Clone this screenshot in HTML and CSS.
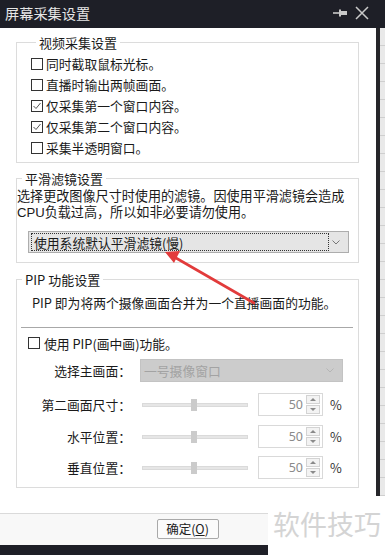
FILE: index.html
```html
<!DOCTYPE html>
<html lang="zh-CN">
<head>
<meta charset="utf-8">
<title>屏幕采集设置</title>
<link rel="stylesheet" href="styles.css">
</head>
<body>
<div class="window">
  <div class="titlebar">
    <span class="title">屏幕采集设置</span>
    <div class="tb-icons">
      <svg class="pin" width="16" height="10" viewBox="0 0 16 10"><path d="M0 5 H6" stroke="#c9c9c9" stroke-width="1.6"/><rect x="6" y="1.5" width="2" height="7" fill="#c9c9c9"/><rect x="8" y="3" width="6" height="4" fill="#c9c9c9"/></svg>
      <svg class="close" width="14" height="14" viewBox="0 0 14 14"><path d="M1 1 L13 13 M13 1 L1 13" stroke="#c9c9c9" stroke-width="1.5"/></svg>
    </div>
  </div>
  <div class="middle">
    <div class="dialog">
      <div class="content">
        <fieldset class="group g1">
          <legend>视频采集设置</legend>
          <div class="cb-row"><span class="cb"></span><span>同时截取鼠标光标。</span></div>
          <div class="cb-row"><span class="cb"></span><span>直播时输出两帧画面。</span></div>
          <div class="cb-row"><span class="cb checked"><svg width="10" height="10" viewBox="0 0 10 10"><path d="M1.5 5 L4 7.5 L8.5 2" fill="none" stroke="#555" stroke-width="1"/></svg></span><span>仅采集第一个窗口内容。</span></div>
          <div class="cb-row"><span class="cb checked"><svg width="10" height="10" viewBox="0 0 10 10"><path d="M1.5 5 L4 7.5 L8.5 2" fill="none" stroke="#555" stroke-width="1"/></svg></span><span>仅采集第二个窗口内容。</span></div>
          <div class="cb-row"><span class="cb"></span><span>采集半透明窗口。</span></div>
        </fieldset>

        <fieldset class="group g2">
          <legend>平滑滤镜设置</legend>
          <div class="desc">
            <span class="dline">选择更改图像尺寸时使用的滤镜。因使用平滑滤镜会造成</span>
            <span class="dline">CPU负载过高，所以如非必要请勿使用。</span>
          </div>
          <div class="select sel-main">
            <span class="focus">使用系统默认平滑滤镜(慢)</span>
            <svg class="chev" width="8" height="5" viewBox="0 0 8 5"><path d="M0.5 0.5 L4 4 L7.5 0.5" fill="none" stroke="#777" stroke-width="1"/></svg>
          </div>
        </fieldset>

        <fieldset class="group g3">
          <legend>PIP 功能设置</legend>
          <p class="pip-desc">PIP 即为将两个摄像画面合并为一个直播画面的功能。</p>
          <div class="sep"></div>
          <div class="cb-row pip-cb"><span class="cb"></span><span>使用 PIP(画中画)功能。</span></div>
          <div class="form-row r0">
            <span class="flabel">选择主画面：</span>
            <div class="select sel-dis">
              <span>一号摄像窗口</span>
              <svg class="chev" width="8" height="5" viewBox="0 0 8 5"><path d="M0.5 0.5 L4 4 L7.5 0.5" fill="none" stroke="#b5b5b5" stroke-width="1"/></svg>
            </div>
          </div>
          <div class="form-row r1">
            <span class="flabel">第二画面尺寸：</span>
            <div class="slider"><span class="track"></span><span class="thumb"></span></div>
            <div class="spin"><span class="val">50</span><span class="spin-btns"><span class="sb up"></span><span class="sb down"></span></span></div>
            <span class="pct">%</span>
          </div>
          <div class="form-row r2">
            <span class="flabel">水平位置：</span>
            <div class="slider"><span class="track"></span><span class="thumb"></span></div>
            <div class="spin"><span class="val">50</span><span class="spin-btns"><span class="sb up"></span><span class="sb down"></span></span></div>
            <span class="pct">%</span>
          </div>
          <div class="form-row r3">
            <span class="flabel">垂直位置：</span>
            <div class="slider"><span class="track"></span><span class="thumb"></span></div>
            <div class="spin"><span class="val">50</span><span class="spin-btns"><span class="sb up"></span><span class="sb down"></span></span></div>
            <span class="pct">%</span>
          </div>
        </fieldset>
      </div>
      <div class="footer">
        <button class="ok">确定(<u>O</u>)</button>
      </div>
    </div>
    <div class="side"><span class="side-dark"></span><span class="side-light"></span></div>
  </div>
  <div class="bottombar"></div>

  <svg class="arrow" width="385" height="555" viewBox="0 0 385 555">
    <path d="M254 303 L176 258" stroke="#e23b3b" stroke-width="2.6" stroke-linecap="round"/>
    <path d="M165 252 L180 251 L174 263 Z" fill="#e23b3b"/>
  </svg>
  <div class="watermark">软件技巧</div>
</div>
</body>
</html>
```

FILE: styles.css
```css
* { box-sizing: border-box; }
html, body { margin: 0; padding: 0; background: #fff; }
body {
  font-family: "Noto Sans CJK SC", "Microsoft YaHei", sans-serif;
  font-size: 13px;
  color: #1a1a1a;
}
.window {
  position: relative;
  width: 385px;
  height: 555px;
  display: flex;
  flex-direction: column;
  overflow: hidden;
}
.titlebar {
  height: 28px;
  flex: none;
  background: #1e1f27;
  display: flex;
  align-items: center;
  justify-content: space-between;
  padding: 0 16px 0 5px;
}
.title {
  color: #e6e6e6;
  font-size: 14.2px;
  line-height: 18px;
  margin-top: -3px;
}
.tb-icons { display: flex; align-items: center; gap: 6px; margin-top: -2px; }
.middle { flex: 1; display: flex; min-height: 0; }
.dialog {
  width: 376px;
  flex: none;
  display: flex;
  flex-direction: column;
  background: #fff;
}
.content { flex: 1; }
.side { flex: 1; display: flex; }
.side-dark { width: 4px; background: #26262a; }
.side-light {
  flex: 1;
  background: repeating-linear-gradient(180deg, #e9e9e9 0 17px, #cfcfcf 17px 18px);
}
.bottombar { height: 10px; flex: none; background: #1e1f27; }

.group {
  margin: 0 17px 0 16px;
  padding: 0;
  border: 1px solid #dcdcdc;
  min-width: 0;
}
.group legend {
  padding: 0 3px;
  margin-left: 5px;
  line-height: 17px;
  font-size: 13px;
  color: #1a1a1a;
}
.g1 { margin-top: 6px; padding: 2px 0 4px 14px; }
.g2 { margin-top: 7px; padding: 2px 0 9px 0; }
.g3 { margin-top: 8px; padding: 0 0 8px 0; }

.cb-row {
  height: 21px;
  display: flex;
  align-items: center;
  gap: 3px;
  font-size: 12.8px;
}
.cb {
  width: 12px;
  height: 12px;
  border: 1px solid #333;
  background: #fff;
  display: flex;
  align-items: center;
  justify-content: center;
  flex: none;
}

.desc {
  display: flex;
  flex-direction: column;
  font-family: "Liberation Sans", "Noto Sans CJK SC", sans-serif;
  font-size: 13.1px;
  white-space: nowrap;
}
.dline {
  display: block;
  height: 16px;
  line-height: 16px;
}
.select {
  height: 22px;
  display: flex;
  align-items: center;
  justify-content: space-between;
  position: relative;
}
.sel-main {
  margin: 10px 0 0 11px;
  width: 321px;
  background: #e5e5e5;
  border: 1px solid #adadad;
  padding: 0 8px 0 2px;
}
.sel-main .focus {
  display: block;
  width: 298px;
  height: 18px;
  line-height: 17px;
  border: 1px dotted #333;
  padding-left: 2px;
  font-size: 12.8px;
}
.pip-desc {
  margin: 6px 0 0 15px;
  line-height: 17px;
  font-size: 12.8px;
  white-space: nowrap;
}
.sep {
  margin: 16px 5px 0 4px;
  height: 1px;
  background: #a8a8a8;
}
.pip-cb { margin-top: 5px; height: 20px; padding-left: 11px; gap: 4px; }

.form-row {
  display: flex;
  align-items: center;
  height: 23px;
}
.r0 { margin-top: 6px; }
.r1 { margin-top: 11px; }
.r2 { margin-top: 9px; }
.r3 { margin-top: 8px; }
.flabel {
  width: 114px;
  text-align: right;
  font-size: 12.8px;
  flex: none;
}
.sel-dis {
  margin-left: 9px;
  width: 203px;
  height: 23px;
  background: #cccccc;
  border: 1px solid #c3c3c3;
  color: #a3a3a3;
  padding: 0 8px 0 3px;
  font-size: 12.8px;
}
.slider {
  position: relative;
  margin-left: 11px;
  width: 106px;
  height: 14px;
  flex: none;
}
.track {
  position: absolute;
  left: 0; right: 0; top: 5px;
  height: 4px;
  background: #e6e6e6;
  border: 1px solid #dadada;
}
.thumb {
  position: absolute;
  left: 49px;
  top: 1px;
  width: 6px;
  height: 12px;
  background: #cbcbcb;
}
.spin {
  margin-left: 10px;
  width: 65px;
  height: 23px;
  border: 1px solid #d9d9d9;
  display: flex;
  align-items: center;
  justify-content: flex-end;
  padding-right: 2px;
  flex: none;
}
.val { color: #8a8a8a; font-size: 12.5px; margin-right: 3px; font-family: "Noto Sans", sans-serif; }
.spin-btns { display: flex; flex-direction: column; gap: 1px; }
.sb {
  width: 14px;
  height: 9px;
  border: 1px solid #d3d3d3;
  background: #f3f3f3;
  position: relative;
}
.sb::after {
  content: "";
  position: absolute;
  left: 3px;
  top: 2px;
  border-left: 3px solid transparent;
  border-right: 3px solid transparent;
}
.sb.up::after { border-bottom: 3px solid #8a8a8a; }
.sb.down::after { border-top: 3px solid #8a8a8a; }
.pct { margin-left: 7px; font-size: 12.8px; color: #333; }

.footer {
  height: 32px;
  flex: none;
  border-top: 1px solid #dadada;
  background: #f8f8f8;
  display: flex;
  justify-content: center;
  padding-top: 5px;
}
.ok {
  width: 62px;
  height: 20px;
  margin-right: 1px;
  font-family: "Noto Sans CJK SC", sans-serif;
  font-size: 12.5px;
  line-height: 16px;
  padding: 0;
  color: #222;
  background: #fbfbfb;
  border: 1px solid #a9a9a9;
  border-radius: 2px;
}
.arrow { position: absolute; left: 0; top: 0; pointer-events: none; }
.watermark {
  position: absolute;
  left: 268px;
  top: 496px;
  width: 117px;
  height: 59px;
  background: #fff;
  color: #d4d4d4;
  font-size: 27px;
  line-height: 27px;
  padding: 14px 0 0 5px;
  white-space: nowrap;
}
```
